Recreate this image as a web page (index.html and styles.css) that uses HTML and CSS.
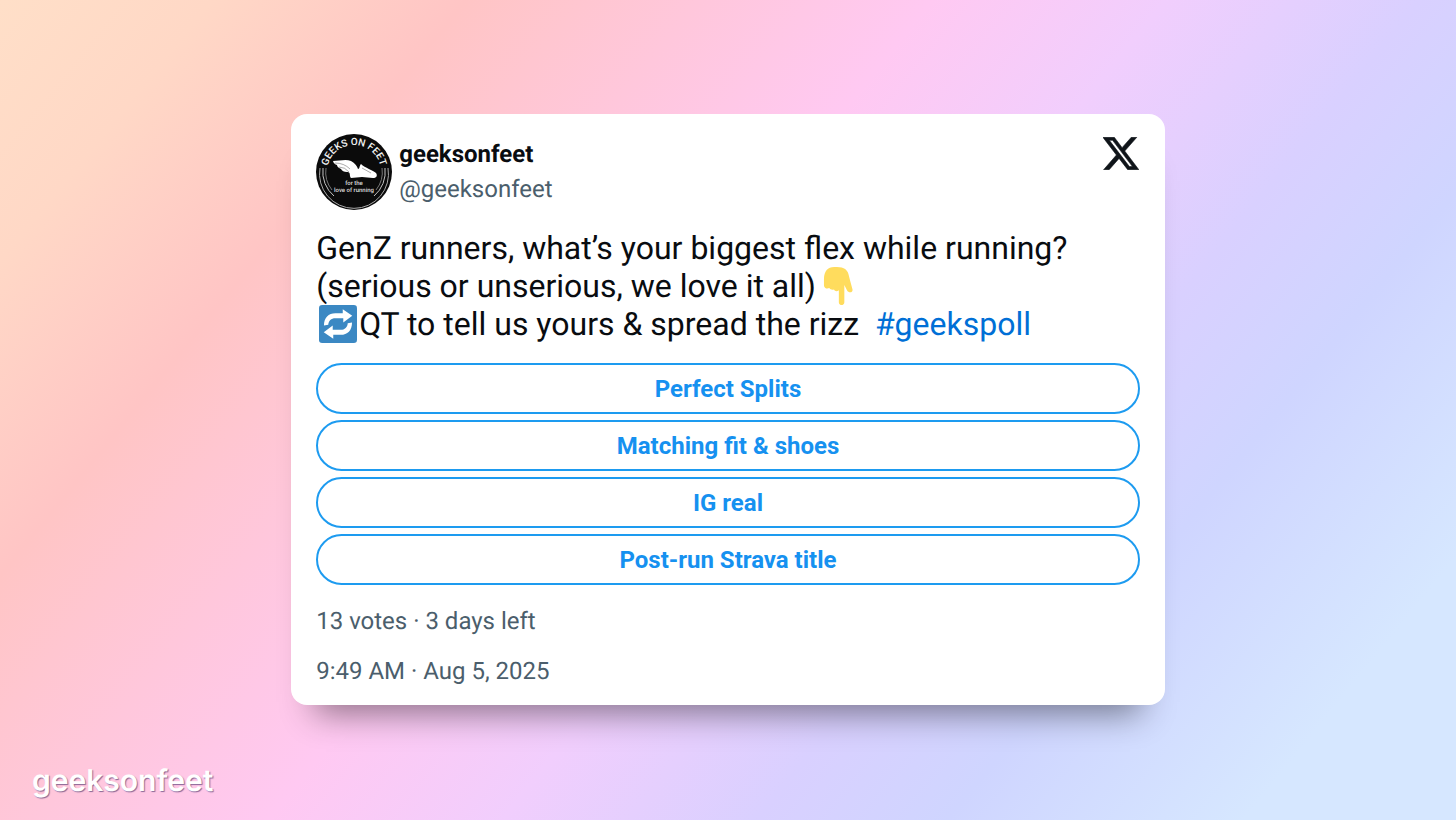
FILE: index.html
```html
<!DOCTYPE html>
<html lang="en">
<head>
<meta charset="utf-8">
<meta name="viewport" content="width=device-width, initial-scale=1">
<title>geeksonfeet poll</title>
<link rel="stylesheet" href="styles.css">
</head>
<body class="page">
<main class="card">
  <header class="card-header">
    <svg class="avatar" viewBox="0 0 76 76" role="img" aria-label="Geeks on Feet logo">
      <defs><path id="arc" d="M11 38A27 27 0 0 1 65 38"/></defs>
      <circle cx="38" cy="38" r="38" fill="#0b0b0b"/>
      <path d="M4 34A34.500 34.500 0 1 0 72 34" fill="none" stroke="#a8a8a8"/>
      <path d="M7 34A31.500 31.500 0 0 0 18 62M69 34A31.500 31.500 0 0 1 58 62" fill="none" stroke="#c4c4c4"/>
      <path d="M10 34A28.500 28.500 0 0 0 16 56M66 34A28.500 28.500 0 0 1 60 56" fill="none" stroke="#777"/>
      <text class="avatar-ring"><textPath href="#arc" startOffset="50%">GEEKS ON FEET</textPath></text>
      <path d="M17 27C23 27 30 25 35 27C39 29 41 32 42 35C44 35 43 32 45 30C49 34 57 36 60 39C62 42 60 44 57 44L46 43L35 44C33 42 35 39 32 38C29 38.500 26 37 25 35C22 34 21 32 21 31C19 30.500 17.500 29 17 27Z" fill="#fff"/>
      <path d="M19 29Q28 29 34 35M23 33Q29 33 33 38M46 34L55 39" fill="none" stroke="#555" stroke-width=".5"/>
      <text class="avatar-motto" x="38" y="51">for the</text>
      <text class="avatar-motto" x="38" y="58">love of running</text>
    </svg>
    <div class="author">
      <div class="name">geeksonfeet</div>
      <div class="handle">@geeksonfeet</div>
    </div>
    <svg class="x-logo" viewBox="0 0 300 271" role="img" aria-label="X">
      <path fill="#0f1419" stroke="#0f1419" stroke-width="5" d="m236 0h46l-101 115 118 156h-92.600l-72.500-94.800-83 94.800h-46l107-123-113-148h94.900l65.500 86.600zm-16.100 244h25.500l-165-218h-27.400z"/>
    </svg>
  </header>
  <p class="post">GenZ runners, what’s your biggest flex while running?<br>
    (serious or unserious, we love it all)<svg class="emoji" viewBox="0 0 36 36" aria-hidden="true"><path fill="#ffdc5d" d="M14.500 0H17C24 0 27 3 28 7L29.500 13L31.700 21C32.500 24.500 28 25 26.500 22L24 17V33.500C24 37 18.800 37 18.800 33.500V22C17 23.500 15 23 14.200 21.300C12.500 22 10.500 21.500 9.800 20C7.500 21.200 4.800 20 4.700 17.500V11C5 4 8 0 14.500 0Z"/></svg><br>
    <svg class="emoji" viewBox="0 0 36 36" aria-hidden="true"><rect width="36" height="36" rx="3" fill="#3b88c3"/><g fill="#fff"><path d="M4.700 19.500C4.700 12 9 7.800 15.500 7.800H22.500V4L31.500 10.200L23 16.500V12.500H15.500C11.500 12.500 9 15 8.800 18.800Z"/><path d="M4.700 19.500C4.700 12 9 7.800 15.500 7.800H22.500V4L31.500 10.200L23 16.500V12.500H15.500C11.500 12.500 9 15 8.800 18.800Z" transform="rotate(180 18 18)"/></g></svg>QT to tell us yours &amp; spread the rizz&nbsp; <a class="tag" href="#geekspoll">#geekspoll</a></p>
  <div class="poll">
    <button class="option" type="button">Perfect Splits</button>
    <button class="option" type="button">Matching fit &amp; shoes</button>
    <button class="option" type="button">IG real</button>
    <button class="option" type="button">Post-run Strava title</button>
  </div>
  <p class="meta">13 votes · 3 days left</p>
  <p class="meta"><time datetime="2025-08-05T09:49">9:49 AM · Aug 5, 2025</time></p>
</main>
<div class="watermark">geeksonfeet</div>
</body>
</html>
```

FILE: styles.css
```css
* { box-sizing: border-box; }

.page {
  margin: 0;
  padding-bottom: 1px;
  min-height: 100vh;
  display: flex;
  align-items: center;
  justify-content: center;
  position: relative;
  font-family: Roboto, "Liberation Sans", sans-serif;
  text-rendering: geometricPrecision;
  color: #090c10;
  background: linear-gradient(129deg, #ffdfc8 0%, #ffd8c6 10%, #ffc5c5 22%, #ffc9f2 44%, #f1cefd 55%, #d9d0ff 67%, #cfd5ff 76%, #d6e7ff 90%);
}

.card {
  width: 60%;
  min-width: 600px;
  padding: 20px 25px;
  border-radius: 16px;
  background: #fff;
  box-shadow: 0 32px 32px -24px rgba(0, 0, 0, 0.45);
}

.card-header {
  display: flex;
  align-items: center;
  gap: 7px;
}

.avatar {
  width: 76px;
  height: 76px;
  flex: none;
}

.avatar-ring {
  font: 500 10px Roboto, sans-serif;
  fill: #f2f2f2;
  text-anchor: middle;
}

.avatar-motto {
  font: 500 6px Roboto, sans-serif;
  fill: #ddd;
  text-anchor: middle;
}

.author {
  flex: 1;
  font-size: 24px;
  line-height: 35px;
}

.name { font-weight: 700; }

.handle { color: #4b5e6c; }

.x-logo {
  width: 36px;
  height: 33px;
  margin: 3px 1px;
  align-self: flex-start;
}

.post {
  margin: 19px 0 20px;
  font-size: 32px;
  line-height: 38px;
}

.emoji {
  width: 38px;
  height: 38px;
  margin: 0 2px 0 3px;
  vertical-align: -8px;
}

.tag {
  color: #006fd6;
  text-decoration: none;
}

.poll {
  display: grid;
  gap: 6px;
}

.option {
  height: 51px;
  padding: 0 24px;
  border: 2px solid #1d9bf0;
  border-radius: 26px;
  background: #fff;
  color: #1691f0;
  font: 700 24px Roboto, sans-serif;
  cursor: pointer;
}

.meta {
  margin: 22px 0 0;
  color: #4b5e6c;
  font-size: 24px;
  line-height: 28px;
}

.watermark {
  position: absolute;
  left: 32px;
  bottom: 21px;
  color: #fff;
  font: 600 30px/36px Inter, sans-serif;
  text-shadow: 1px 1px 1px rgba(60, 40, 100, 0.6);
}
```
